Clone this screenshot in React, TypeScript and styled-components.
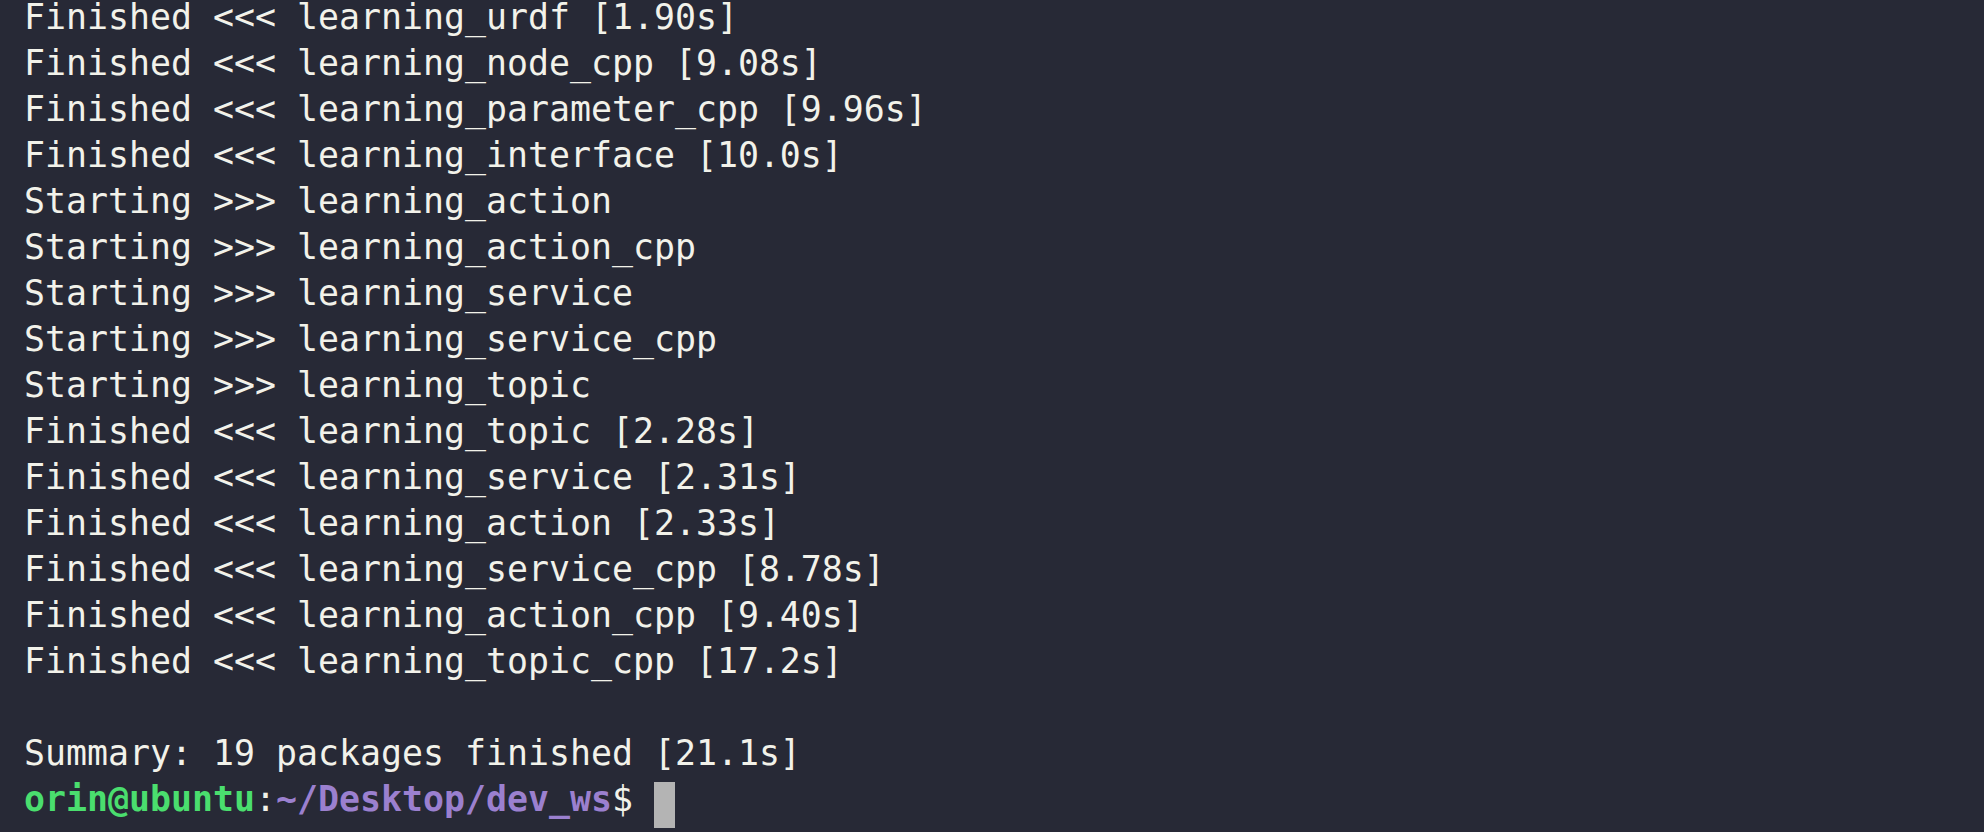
import React from "react";
import styled, { createGlobalStyle } from "styled-components";

const Global = createGlobalStyle`
  html, body {
    margin: 0;
    padding: 0;
    background: #272936;
    overflow: hidden;
  }
`;

const Terminal = styled.div`
  width: 1984px;
  height: 832px;
  box-sizing: border-box;
  background: #272936;
  padding: 0 0 0 24px;
  overflow: hidden;
  display: flex;
  flex-direction: column;
  font-family: "DejaVu Sans Mono", "Liberation Mono", monospace;
  font-size: 34.88px;
  line-height: 34px;
  color: #f2f2ea;
`;

const Line = styled.div`
  height: 46px;
  flex: 0 0 46px;
  display: flex;
  align-items: flex-start;
  white-space: pre;
`;

const Seg = styled.span<{ $tone?: "green" | "purple" }>`
  white-space: pre;
  font-weight: ${(p) => (p.$tone ? 700 : 400)};
  color: ${(p) =>
    p.$tone === "green" ? "#4ade6e" : p.$tone === "purple" ? "#9b80cf" : "#f2f2ea"};
`;

const Cursor = styled.span`
  display: block;
  width: 21px;
  height: 46px;
  background: #b4b4b4;
`;

const lines = [
  "Finished <<< learning_urdf [1.90s]",
  "Finished <<< learning_node_cpp [9.08s]",
  "Finished <<< learning_parameter_cpp [9.96s]",
  "Finished <<< learning_interface [10.0s]",
  "Starting >>> learning_action",
  "Starting >>> learning_action_cpp",
  "Starting >>> learning_service",
  "Starting >>> learning_service_cpp",
  "Starting >>> learning_topic",
  "Finished <<< learning_topic [2.28s]",
  "Finished <<< learning_service [2.31s]",
  "Finished <<< learning_action [2.33s]",
  "Finished <<< learning_service_cpp [8.78s]",
  "Finished <<< learning_action_cpp [9.40s]",
  "Finished <<< learning_topic_cpp [17.2s]",
  "",
  "Summary: 19 packages finished [21.1s]",
];

export default function App() {
  return (
    <>
      <Global />
      <Terminal>
        {lines.map((l, i) => (
          <Line key={i}>
            <Seg>{l === "" ? "\u00a0" : l}</Seg>
          </Line>
        ))}
        <Line>
          <Seg $tone="green">orin@ubuntu</Seg>
          <Seg>:</Seg>
          <Seg $tone="purple">~/Desktop/dev_ws</Seg>
          <Seg>$ </Seg>
          <Cursor />
        </Line>
      </Terminal>
    </>
  );
}
